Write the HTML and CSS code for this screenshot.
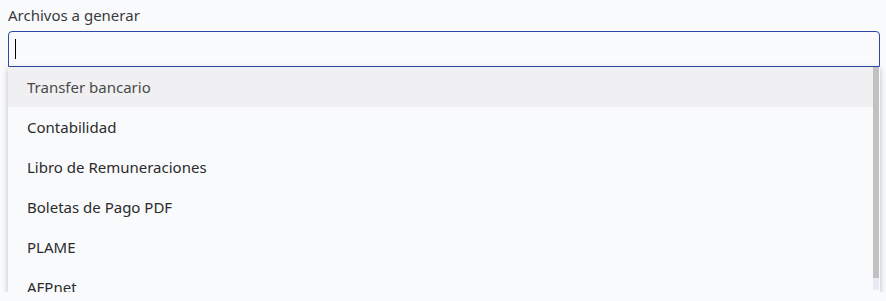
FILE: index.html
```html
<!DOCTYPE html>
<html lang="es">
<head>
<meta charset="utf-8">
<link rel="stylesheet" href="styles.css">
</head>
<body>
<div class="field">
  <label class="label">Archivos a generar</label>
  <div class="select">
    <div class="input"><span class="caret"></span></div>
    <div class="menu">
      <ul class="list">
        <li class="item active">Transfer bancario</li>
        <li class="item">Contabilidad</li>
        <li class="item">Libro de Remuneraciones</li>
        <li class="item">Boletas de Pago PDF</li>
        <li class="item">PLAME</li>
        <li class="item">AFPnet</li>
      </ul>
      <div class="scrollbar"><div class="thumb"></div></div>
    </div>
  </div>
</div>
</body>
</html>
```
FILE: styles.css
```css
html, body {
  margin: 0;
  padding: 0;
  background: #f9fafc;
}
body {
  font-family: "Noto Sans", "Open Sans", sans-serif;
  color: #333;
  padding: 5px 6px 0 8px;
}
.field {
  display: flex;
  flex-direction: column;
}
.label {
  font-size: 15px;
  line-height: 20px;
  color: #3a3a3a;
  margin-bottom: 6px;
}
.select {
  display: flex;
  flex-direction: column;
}
.input {
  height: 34px;
  border: 1px solid #2f48a6;
  border-radius: 4px 4px 0 0;
  background: #fafbfd;
  display: flex;
  align-items: center;
  padding-left: 6px;
}
.caret {
  width: 1px;
  height: 20px;
  background: #000;
}
.menu {
  position: relative;
  height: 225px;
  overflow: hidden;
  background: #f9fafc;
  box-shadow: 0 2px 6px rgba(0,0,0,0.25);
}
.list {
  list-style: none;
  margin: 0;
  padding: 0 6px 0 0;
}
.item {
  height: 40px;
  display: flex;
  align-items: center;
  padding-left: 19px;
  font-size: 15px;
  color: #2b2b2b;
}
.item.active {
  background: #f0f0f2;
  color: #4a4a4a;
}
.scrollbar {
  position: absolute;
  top: 0;
  right: 1px;
  bottom: 2px;
  width: 6px;
  background: #eaeaf6;
}
.thumb {
  height: 211px;
  background: #c1c1c1;
}
```
